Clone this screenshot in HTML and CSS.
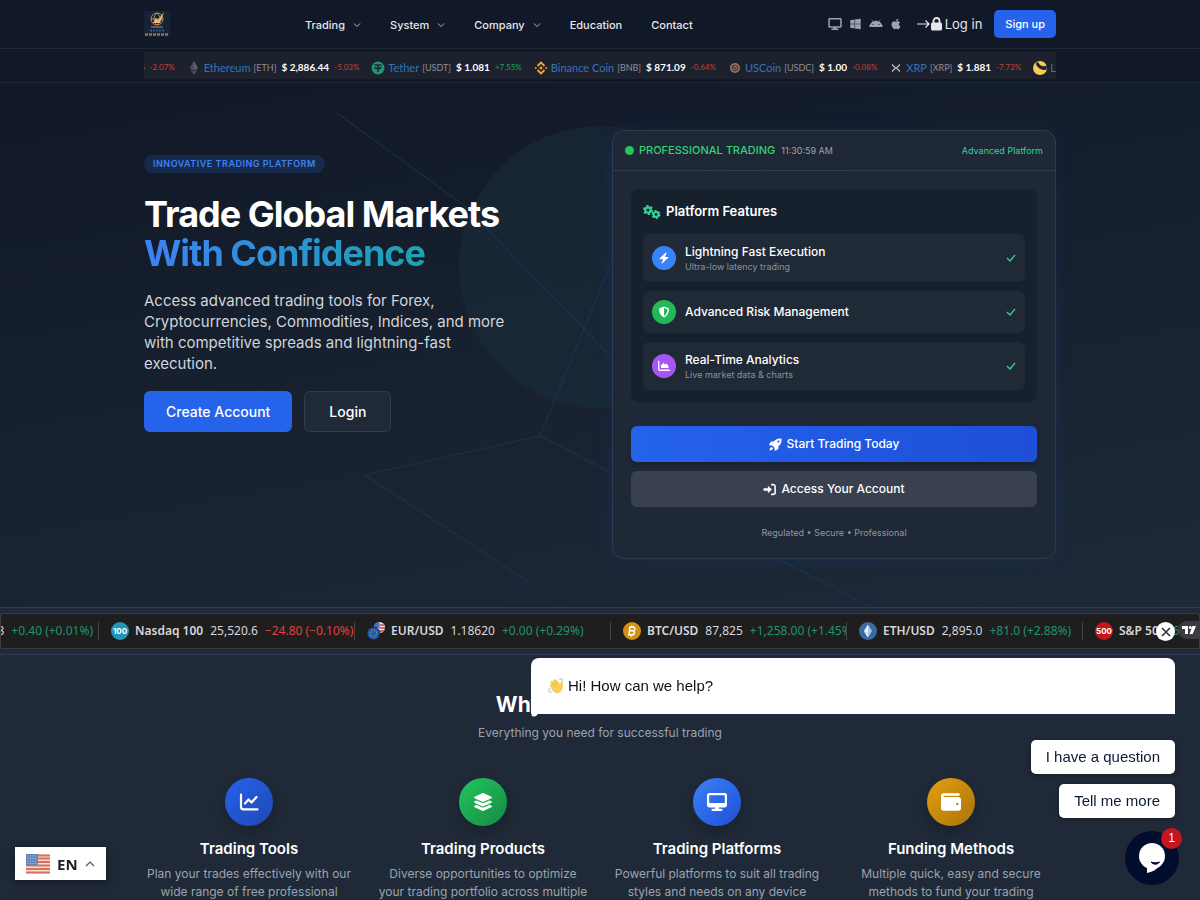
FILE: index.html
```html
<!DOCTYPE html>
<html lang="en">
<head>
    <meta charset="UTF-8">
    <meta name="viewport" content="width=device-width, initial-scale=1.0">
    <title>Trade Global Markets With Confidence</title>
    <link rel="stylesheet" href="styles.css">
</head>
<body>
    <!-- Header -->
    <header class="header">
        <div class="container header-inner">
            <a href="#" class="logo" aria-label="Home">
                <svg viewBox="0 0 26 26" width="26" height="26">
                    <rect width="26" height="26" fill="#172333"/>
                    <g fill="none" stroke="#b98b5e">
                        <circle cx="13" cy="8" r="6"/>
                        <path d="M7 8h12M13 2c-4 3-4 9 0 12M13 2c4 3 4 9 0 12M7 16h12"/>
                    </g>
                    <path d="M9 12l3-5 2 2 6-8-4 11z" fill="#e5bd87"/>
                    <path d="M6 19.500h14" stroke="#245a9c" stroke-width="2" stroke-dasharray="2 1"/>
                    <path d="M1 23.500h24" stroke="#a77b60" stroke-width="2" stroke-dasharray="3 1"/>
                </svg>
            </a>
            <nav class="nav">
                <a href="#">Trading <svg class="chevron" viewBox="0 0 8 8"><path d="M1 2.500l3 3 3-3"/></svg></a>
                <a href="#">System <svg class="chevron" viewBox="0 0 8 8"><path d="M1 2.500l3 3 3-3"/></svg></a>
                <a href="#">Company <svg class="chevron" viewBox="0 0 8 8"><path d="M1 2.500l3 3 3-3"/></svg></a>
                <a href="#">Education</a>
                <a href="#">Contact</a>
            </nav>
            <div class="header-actions">
                <div class="platforms">
                    <svg viewBox="0 0 576 512" width="14" height="12"><path fill-rule="evenodd" d="M64 0C29 0 0 29 0 64v288c0 35 29 64 64 64h176l-11 32h-69c-18 0-32 14-32 32s14 32 32 32h256c18 0 32-14 32-32s-14-32-32-32h-69l-11-32h176c35 0 64-29 64-64V64c0-35-29-64-64-64H64zm448 64v288H64V64h448z"/></svg>
                    <svg viewBox="0 0 448 512" width="11" height="12"><path d="M0 93.700l183.600-25.300v177.400H0V93.700zm0 324.600l183.600 25.300V268.400H0v149.900zm203.800 28L448 480V268.400H203.800v177.900zm0-380.600v180.100H448V32L203.800 65.700z"/></svg>
                    <svg viewBox="0 0 576 512" width="14" height="12"><path d="M420.550,301.930a24,24,0,1,1,24-24,24,24,0,0,1-24,24m-265.100,0a24,24,0,1,1,24-24,24,24,0,0,1-24,24m273.700-144.480,47.940-83a10,10,0,1,0-17.270-10h0l-48.540,84.070a301.250,301.250,0,0,0-246.560,0L116.180,64.450a10,10,0,1,0-17.270,10h0l47.940,83C64.530,202.220,8.240,285.550,0,384H576c-8.240-98.450-64.540-181.780-146.850-226.550"/></svg>
                    <svg viewBox="0 0 384 512" width="10" height="12"><path d="M318.700 268.700c-.2-36.700 16.400-64.400 50-84.800-18.800-26.900-47.200-41.700-84.700-44.600-35.500-2.800-74.300 20.700-88.500 20.700-15 0-49.400-19.700-76.400-19.700C63.300 141.200 4 184.800 4 273.500q0 39.300 14.400 81.200c12.800 36.700 59 126.700 107.200 125.200 25.200-.6 43-17.900 75.800-17.900 31.800 0 48.300 17.900 76.400 17.900 48.600-.7 90.400-82.500 102.600-119.300-65.200-30.700-61.700-90-61.700-91.900zm-56.600-164.200c27.300-32.400 24.800-61.900 24-72.500-24.100 1.400-52 16.400-67.900 34.900-17.500 19.800-27.800 44.300-25.600 71.900 26.100 2 49.900-11.400 69.500-34.300z"/></svg>
                </div>
                <a href="#" class="login-link">
                    <svg viewBox="0 0 27 14" width="27" height="14">
                        <path d="M1 7h12M9.500 3.500L13 7l-3.500 3.500" fill="none" stroke="#e5e7eb" stroke-width="1.200"/>
                        <rect x="15" y="5.500" width="11" height="8" rx="1.500" fill="#e5e7eb"/>
                        <path d="M17.500 6V4a3 3 0 0 1 6 0v2" fill="none" stroke="#e5e7eb" stroke-width="1.800"/>
                    </svg>
                    Log in
                </a>
                <a href="#" class="btn-signup">Sign up</a>
            </div>
        </div>
    </header>

    <!-- Crypto ticker -->
    <div class="crypto-bar">
        <div class="container">
            <div class="crypto-strip">
                <div class="crypto-track">
                    <div class="coin"><a href="#">Bitcoin</a><span class="code">[BTC]</span><b>$ 87,825.55</b><span class="change down">-2.07%</span></div>
                    <div class="coin">
                        <svg viewBox="0 0 14 14"><path d="M7 0l4 7-4 2.500L3 7z" fill="#5b6270"/><path d="M7 0v9.500L3 7zM3 8l4 2.500L11 8l-4 6z" fill="#484e5b"/></svg>
                        <a href="#">Ethereum</a><span class="code">[ETH]</span><b>$ 2,886.44</b><span class="change down">-5.03%</span>
                    </div>
                    <div class="coin">
                        <svg viewBox="0 0 14 14"><circle cx="7" cy="7" r="6.500" fill="#22926f"/><path d="M3.500 4h7M7 4v7M3.500 6.500c2 1.200 5 1.200 7 0" stroke="#1b2a33" stroke-width="1.500" fill="none"/></svg>
                        <a href="#">Tether</a><span class="code">[USDT]</span><b>$ 1.081</b><span class="change up">+7.55%</span>
                    </div>
                    <div class="coin">
                        <svg viewBox="0 0 14 14" fill="none" stroke="#efa92d" stroke-width="1.800"><path d="M3.500 5L7 1.500 10.500 5M3.500 9L7 12.500 10.500 9"/><path d="M7 5.200L8.800 7 7 8.800 5.200 7zM1.800 5.800L3 7 1.800 8.200.6 7zM12.200 5.800L13.400 7l-1.200 1.200L11 7z" fill="#efa92d" stroke="none"/></svg>
                        <a href="#">Binance Coin</a><span class="code">[BNB]</span><b>$ 871.09</b><span class="change down">-0.64%</span>
                    </div>
                    <div class="coin">
                        <svg viewBox="0 0 14 14"><circle cx="7" cy="7" r="5" fill="#9a7560"/><circle cx="7" cy="7" r="3" fill="none" stroke="#3c3237"/><path d="M6 5v3h2V6" fill="none" stroke="#3c3237"/></svg>
                        <a href="#">USCoin</a><span class="code">[USDC]</span><b>$ 1.00</b><span class="change down">-0.08%</span>
                    </div>
                    <div class="coin">
                        <svg viewBox="0 0 14 14"><path d="M3 3.500l2.800 2.800q1.200 1 2.400 0L11 3.500M3 10.500l2.800-2.800q1.200-1 2.400 0l2.800 2.800" fill="none" stroke="#b6bac2" stroke-width="1.300"/></svg>
                        <a href="#">XRP</a><span class="code">[XRP]</span><b>$ 1.881</b><span class="change down">-7.72%</span>
                    </div>
                    <div class="coin">
                        <svg viewBox="0 0 14 14"><circle cx="7" cy="7" r="7" fill="#f6cb58"/><path d="M3 2C3 6 8 9.500 13 9c1-1.500 1-3 .6-4.500C11 6 6.500 5 5 1z" fill="#25262f"/></svg>
                        <a href="#">Luna</a><span class="code">[LUNA]</span>
                    </div>
                </div>
            </div>
        </div>
    </div>

    <!-- Hero -->
    <section class="hero">
        <svg class="hero-art" viewBox="0 82 1200 525" preserveAspectRatio="xMidYMin slice" aria-hidden="true">
            <circle cx="600" cy="266" r="141" fill="#1c3142" fill-opacity="0.400"/>
            <g fill="none" stroke="#1e3a5f" stroke-opacity="0.500" stroke-width="1.500">
                <path d="M337 112L465 205 612 357M540 435L620 240"/>
                <path d="M540 435L365 474 530 582M540 435L873 607"/>
            </g>
        </svg>
        <div class="container hero-grid">
            <div class="hero-text">
                <span class="badge">INNOVATIVE TRADING PLATFORM</span>
                <h1>Trade Global Markets<br><span class="gradient-text">With Confidence</span></h1>
                <p>Access advanced trading tools for Forex, Cryptocurrencies, Commodities, Indices, and more with competitive spreads and lightning-fast execution.</p>
                <div class="hero-buttons">
                    <a href="#" class="btn btn-primary">Create Account</a>
                    <a href="#" class="btn btn-dark">Login</a>
                </div>
            </div>

            <div class="card">
                <div class="card-header">
                    <span class="dot"></span>
                    <span class="card-title">PROFESSIONAL TRADING</span>
                    <span class="clock">11:30:59 AM</span>
                    <span class="card-tag">Advanced Platform</span>
                </div>
                <div class="card-body">
                    <div class="features">
                        <h2>
                            <svg viewBox="0 0 18 14" width="18" height="14" fill="none" stroke="#34d399">
                                <circle cx="5" cy="5" r="2.700" stroke-width="2.200"/>
                                <circle cx="5" cy="5" r="4.200" stroke-width="1.700" stroke-dasharray="2.200 2.200"/>
                                <circle cx="13" cy="9.500" r="2.500" stroke-width="2.200"/>
                                <circle cx="13" cy="9.500" r="3.800" stroke-width="1.500" stroke-dasharray="2 2"/>
                            </svg>
                            Platform Features
                        </h2>
                        <div class="feature">
                            <span class="feature-icon blue"><svg viewBox="0 0 12 12"><path d="M7.800.5L1.800 6.300c-.4.400-.2.900.3.900h3L3.600 11c-.2.500.2.700.6.400l6-5.600c.4-.4.200-.9-.3-.9H7L8.500 1c.2-.5-.3-.8-.7-.5z"/></svg></span>
                            <div><strong>Lightning Fast Execution</strong><small>Ultra-low latency trading</small></div>
                            <svg class="check" viewBox="0 0 10 8"><path d="M1 4l3 3 5-6"/></svg>
                        </div>
                        <div class="feature">
                            <span class="feature-icon green"><svg viewBox="0 0 12 12"><path fill-rule="evenodd" d="M6 .5l4.500 1.800c.4.200.5.400.5.800 0 3.400-1.600 6.800-5 8.400C2.600 9.900 1 6.500 1 3.100c0-.4.100-.6.500-.8zM6 2v8c2.200-1.300 3.500-3.700 3.600-6.500z"/></svg></span>
                            <div><strong>Advanced Risk Management</strong></div>
                            <svg class="check" viewBox="0 0 10 8"><path d="M1 4l3 3 5-6"/></svg>
                        </div>
                        <div class="feature">
                            <span class="feature-icon purple"><svg viewBox="0 0 12 12"><path d="M.7 1.500v7.300c0 1 .5 1.500 1.500 1.500h9.100" fill="none" stroke="#fff" stroke-width="1.400" stroke-linecap="round"/><path d="M3 8V5.500L5.300 2.800l1.700 1.700 1.500-1L10.500 6v2z"/></svg></span>
                            <div><strong>Real-Time Analytics</strong><small>Live market data &amp; charts</small></div>
                            <svg class="check" viewBox="0 0 10 8"><path d="M1 4l3 3 5-6"/></svg>
                        </div>
                    </div>
                    <div class="card-actions">
                        <a href="#" class="action start">
                            <svg viewBox="0 0 12 12" width="13" height="13"><path fill-rule="evenodd" d="M11.500.5C8 0 5.800 1.300 4.300 3.300H2.200C1.500 3.300.2 6 .2 6.300c0 .4.300.6.700.6H3l2.100 2.100v2.100c0 .4.200.7.600.7.300 0 3-1.300 3-2V7.700C10.700 6.200 12 4 11.500.5zM8.800 2.200a1 1 0 1 1 0 2 1 1 0 0 1 0-2zM2.500 8.300C1.200 8.500.5 10 .5 11.500c1.500 0 3-.7 3.200-2z" fill="#fff"/></svg>
                            Start Trading Today
                        </a>
                        <a href="#" class="action access">
                            <svg viewBox="0 0 12 12" width="13" height="13"><path d="M8 1.500h1.500a1.700 1.700 0 0 1 1.700 1.700v5.600a1.700 1.700 0 0 1-1.700 1.700H8" fill="none" stroke="#fff" stroke-width="1.400" stroke-linecap="round"/><path d="M4.500 2.500L8.300 6 4.500 9.500V7.200H.5V4.800h4z" fill="#fff"/></svg>
                            Access Your Account
                        </a>
                    </div>
                    <p class="card-note">Regulated • Secure • Professional</p>
                </div>
            </div>
        </div>
    </section>

    <!-- Market ticker -->
    <div class="market-bar">
        <div class="market-strip">
            <div class="market-track">
                <div class="quote"><span class="price">1.3863</span><span class="gain">+0.40 (+0.01%)</span></div>
                <div class="quote wide">
                    <svg viewBox="0 0 18 18"><circle cx="9" cy="9" r="9" fill="#2196b8"/><text x="9" y="12" text-anchor="middle" class="coin-label">100</text></svg>
                    <b>Nasdaq 100</b><span class="price">25,520.6</span><span class="loss">−24.80 (−0.10%)</span>
                </div>
                <div class="quote wide">
                    <svg viewBox="0 0 18 18">
                        <circle cx="12.500" cy="5.500" r="5.500" fill="#e8e9ee"/>
                        <path d="M12.500 3H17M12.500 6H18M11 9h6" stroke="#d33d46" stroke-width="1.500"/>
                        <path d="M12.500 0A5.500 5.500 0 0 0 7 6h5.500z" fill="#3a72c9"/>
                        <circle cx="6.500" cy="11.500" r="6.800" fill="#1e1e1e"/>
                        <circle cx="6.500" cy="11.500" r="6" fill="#1d5cb5"/>
                        <circle cx="6.500" cy="11.500" r="3.300" fill="none" stroke="#c9b458" stroke-dasharray="1 1.600"/>
                    </svg>
                    <b>EUR/USD</b><span class="price">1.18620</span><span class="gain">+0.00 (+0.29%)</span>
                </div>
                <div class="quote">
                    <svg viewBox="0 0 18 18"><circle cx="9" cy="9" r="9" fill="#d6900f"/><path d="M7 5l-1 8M6 5.200h4.200c2.500 0 2.200 3.500-.5 3.600H7M9.500 8.800c2.800 0 2.300 4-.6 4H5M8.500 3.500v2M8 12.500v2M10.500 3.800v1.500" fill="none" stroke="#fff" stroke-width="1.400"/></svg>
                    <b>BTC/USD</b><span class="price">87,825</span><span class="gain">+1,258.00 (+1.45%)</span>
                </div>
                <div class="quote">
                    <svg viewBox="0 0 18 18"><circle cx="9" cy="9" r="9" fill="#3d6a9f"/><path d="M9 2.500l4 6.500-4 6.500L5 9z" fill="#a8c8e8"/><path d="M9 2.500V11L5 9zM9 12v3.500L5 9.500z" fill="#e9f2fa"/></svg>
                    <b>ETH/USD</b><span class="price">2,895.0</span><span class="gain">+81.0 (+2.88%)</span>
                </div>
                <div class="quote wide">
                    <svg viewBox="0 0 18 18"><circle cx="9" cy="9" r="9" fill="#c4161c"/><text x="9" y="12" text-anchor="middle" class="coin-label">500</text></svg>
                    <b>S&amp;P 500</b><span class="gain">6</span>
                </div>
            </div>
            <button class="tv-badge" aria-label="TradingView">
                <svg viewBox="0 0 14 10" width="14" height="10" fill="#fff"><path d="M0 1h6v8H3V4H0zM10.500 1H14l-3.300 8H7.500z"/><circle cx="8.300" cy="2.500" r="1.500"/></svg>
            </button>
        </div>
    </div>

    <!-- Why us -->
    <section class="why">
        <div class="container">
            <h2>Why Trade With Us?</h2>
            <p class="why-sub">Everything you need for successful trading</p>
            <div class="why-grid">
                <div class="why-item">
                    <span class="why-icon tools"><svg viewBox="0 0 20 20" fill="none" stroke="#fff" stroke-width="2.200" stroke-linecap="round" stroke-linejoin="round"><path d="M2 2.500v12.300c0 1.700.8 2.500 2.500 2.500H18.500M6 11.500l3.500-4 3 3L17.500 5"/></svg></span>
                    <h3>Trading Tools</h3>
                    <p>Plan your trades effectively with our wide range of free professional trading tools.</p>
                </div>
                <div class="why-item">
                    <span class="why-icon products"><svg viewBox="0 0 576 512" fill="#fff"><path d="M264.500 5.200c14.900-6.900 32.100-6.900 47 0l218.600 101c8.500 3.900 13.900 12.400 13.900 21.800s-5.400 17.900-13.900 21.800l-218.600 101c-14.900 6.900-32.100 6.900-47 0L45.900 149.800C37.400 145.800 32 137.300 32 128s5.400-17.900 13.900-21.800L264.500 5.200zM476.900 209.600l53.200 24.600c8.500 3.900 13.900 12.400 13.900 21.800s-5.400 17.900-13.900 21.800l-218.600 101c-14.900 6.900-32.100 6.900-47 0L45.900 277.800C37.400 273.800 32 265.300 32 256s5.400-17.900 13.900-21.800l53.200-24.600 152 70.200c23.400 10.800 50.400 10.800 73.800 0l152-70.200zm-152 198.200l152-70.200 53.200 24.600c8.500 3.900 13.900 12.400 13.900 21.800s-5.400 17.900-13.900 21.800l-218.600 101c-14.900 6.900-32.100 6.900-47 0L45.900 405.800C37.400 401.800 32 393.300 32 384s5.400-17.900 13.900-21.800l53.200-24.600 152 70.200c23.400 10.800 50.400 10.800 73.800 0z"/></svg></span>
                    <h3>Trading Products</h3>
                    <p>Diverse opportunities to optimize your trading portfolio across multiple markets.</p>
                </div>
                <div class="why-item">
                    <span class="why-icon platform"><svg viewBox="0 0 576 512" fill="#fff"><path fill-rule="evenodd" d="M64 0C29 0 0 29 0 64v288c0 35 29 64 64 64h176l-11 32h-69c-18 0-32 14-32 32s14 32 32 32h256c18 0 32-14 32-32s-14-32-32-32h-69l-11-32h176c35 0 64-29 64-64V64c0-35-29-64-64-64H64zm448 64v224H64V64h448z"/></svg></span>
                    <h3>Trading Platforms</h3>
                    <p>Powerful platforms to suit all trading styles and needs on any device anywhere.</p>
                </div>
                <div class="why-item">
                    <span class="why-icon funding"><svg viewBox="0 0 512 512" fill="#fff"><path fill-rule="evenodd" d="M64 32C28.700 32 0 60.700 0 96v320c0 35.300 28.700 64 64 64h384c35.300 0 64-28.700 64-64V192c0-35.300-28.700-64-64-64H80c-8.800 0-16-7.200-16-16s7.200-16 16-16h368c17.700 0 32-14.300 32-32s-14.300-32-32-32H64zm352 240a32 32 0 1 1 0 64 32 32 0 1 1 0-64z"/></svg></span>
                    <h3>Funding Methods</h3>
                    <p>Multiple quick, easy and secure methods to fund your trading account.</p>
                </div>
            </div>
        </div>
    </section>

    <!-- Language switcher -->
    <button class="language">
        <svg viewBox="0 0 24 20" width="24" height="20">
            <rect width="24" height="20" fill="#f0e3cf"/>
            <path d="M0 4.500h24M0 8h24M0 11.500h24M0 15h24M0 18.500h24M0 1.500h24" stroke="#d9705f" stroke-width="2"/>
            <rect width="12" height="11" fill="#5d87b8"/>
            <path d="M1.500 2h10M1.500 4.500h10M1.500 7h10M1.500 9.500h10" stroke="#b9cde2" stroke-dasharray="1 1.500"/>
        </svg>
        EN
        <svg viewBox="0 0 10 8" width="10" height="8"><path d="M1 6l4-4 4 4" fill="none" stroke="#555" stroke-width="1.200"/></svg>
    </button>

    <!-- Chat widget -->
    <div class="chat">
        <button class="chat-close" aria-label="Close"><svg viewBox="0 0 10 10" width="10" height="10"><path d="M1 1l8 8M9 1L1 9" stroke="#333" stroke-width="1.600"/></svg></button>
        <div class="chat-message">
            <svg viewBox="0 0 16 16" width="16" height="16"><path d="M2.500 4.500c-.5-1.500 1-2 1.800-1L5 3c-.4-1.600 1.200-2 2-.9 0-1 1.400-1.300 2-.2l3 4 .8-2c.5-1.300 2.300-.8 2.100.7-.2 3.400.3 6-1.400 8.400-2 2.700-5.500 2.800-7.700.8C4 12 2.500 9.500 2 8c-.5-1 .2-1.600.9-1.500z" fill="#f9cf58"/><path d="M11 1c1.500.3 2.700 1.200 3.500 2.500M12 0c1.500.3 2.800 1.200 3.500 2.500M1 10c.3 2 1.300 3.500 2.800 4.500M0 12c.4 1.400 1.200 2.400 2.300 3.200" fill="none" stroke="#a9c9ea"/><path d="M4.500 5l4 5M6.500 4l3.700 4.800" stroke="#e6b23d" stroke-width=".6"/></svg>
            Hi! How can we help?
        </div>
        <button class="chat-option">I have a question</button>
        <button class="chat-option">Tell me more</button>
        <button class="chat-launcher" aria-label="Open chat">
            <svg viewBox="0 0 28 32" width="28" height="32"><circle cx="14" cy="14" r="13" fill="#fff"/><path d="M9 25v6c5-1 9-3 12-7z" fill="#fff"/><path d="M13 20c2.500 3 6.500 3 8.500 0-2.500 1-6 1-8.500 0z" fill="#000d2d" stroke="#000d2d"/></svg>
            <span class="chat-count">1</span>
        </button>
    </div>
</body>
</html>
```
FILE: styles.css
```css
* {
    box-sizing: border-box;
}
body {
    margin: 0;
    font-family: Inter, sans-serif;
    font-size: 12px;
    line-height: 18px;
    color: #fff;
    background-color: #1f2937;
}
a {
    color: inherit;
    text-decoration: none;
}
h1, h2, h3, p {
    margin: 0;
}
button {
    border: none;
    font-family: inherit;
    cursor: pointer;
}
svg {
    flex: none;
}
.container {
    width: 76%;
    margin: 0 auto;
}

/* Header */
.header {
    background-color: #111827;
    border-bottom: 1px solid #1f2937;
}
.header-inner {
    display: flex;
    align-items: center;
    justify-content: space-between;
    height: 48px;
}
.logo {
    display: flex;
}
.nav {
    display: flex;
    gap: 29px;
    padding-top: 2px;
    font-size: 11px;
    font-weight: 500;
    color: #e5e7eb;
}
.nav a {
    display: flex;
    align-items: center;
    gap: 8px;
}
.chevron {
    width: 8px;
    height: 8px;
    fill: none;
    stroke: #b4b9c2;
}
.header-actions {
    display: flex;
    align-items: center;
    gap: 12px;
}
.platforms {
    display: flex;
    align-items: center;
    gap: 8px;
    margin-right: 3px;
    fill: #9ca3af;
}
.login-link {
    display: flex;
    align-items: center;
    gap: 2px;
    font-size: 13px;
    color: #e5e7eb;
}
.btn-signup {
    padding: 5px 11px;
    font-size: 11px;
    font-weight: 500;
    background-color: #2563eb;
    border-radius: 5px;
}

/* Crypto ticker */
.crypto-bar {
    padding: 3px 0;
    background-color: #111827;
    border-bottom: 1px solid #1c2838;
}
.crypto-strip {
    overflow: hidden;
    background-color: #1d212e;
}
.crypto-track {
    display: flex;
    gap: 12px;
    width: max-content;
    margin-left: -117px;
    padding: 7px 0 3px;
    font-family: Lato, sans-serif;
}
.coin {
    display: flex;
    align-items: center;
    gap: 3px;
    line-height: 17px;
    font-size: 10px;
}
.coin svg {
    width: 14px;
    height: 14px;
}
.coin a {
    font-size: 11px;
    color: #3473b7;
}
.coin .code {
    font-size: 9px;
    color: #8b8f98;
}
.coin b {
    margin: 0 2px;
}
.change {
    font-size: 8px;
}
.up {
    color: #18a35c;
}
.down {
    color: #c2402f;
}

/* Hero */
.hero {
    position: relative;
    padding: 47px 0 48px;
    overflow: hidden;
    background: linear-gradient(170deg, #111827 0%, #16202e 45%, #1e2939 100%);
}
.hero-art {
    position: absolute;
    top: 0;
    left: 0;
    width: 100%;
    height: 100%;
}
.hero-grid {
    position: relative;
    display: grid;
    grid-template-columns: 1fr 1fr;
    gap: 24px;
}
.hero-text {
    max-width: 384px;
    padding-top: 24px;
}
.badge {
    display: inline-block;
    padding: 0 9px;
    font-size: 9px;
    font-weight: 600;
    letter-spacing: 0.5px;
    color: #3b82f6;
    background-color: #172a4c;
    border-radius: 9px;
}
.hero-text h1 {
    margin-top: 22px;
    font-size: 36px;
    line-height: 39px;
    letter-spacing: -1px;
}
.gradient-text {
    color: transparent;
    background: linear-gradient(90deg, #3b82f6, #1fa2b0);
    background-clip: text;
    -webkit-background-clip: text;
}
.hero-text p {
    margin: 17px 0;
    font-size: 15px;
    line-height: 21px;
    color: #d1d5db;
}
.hero-buttons {
    display: flex;
    gap: 12px;
}
.btn {
    padding: 10px 24px;
    font-size: 14px;
    line-height: 19px;
    font-weight: 500;
    border: 1px solid transparent;
    border-radius: 6px;
}
.btn-primary {
    padding: 10px 21px;
    background-color: #2563eb;
}
.btn-dark {
    background-color: #1f2937;
    border-color: #333d4b;
}

/* Hero card */
.card {
    background-color: rgba(31, 41, 55, 0.9);
    border: 1px solid #303c4c;
    border-radius: 12px;
    box-shadow: 0 0 18px rgba(37, 99, 235, 0.12);
}
.card-header {
    display: flex;
    align-items: center;
    padding: 10px 12px;
    line-height: 19px;
    border-bottom: 1px solid #303c4c;
}
.dot {
    width: 9px;
    height: 9px;
    background-color: #22c55e;
    border-radius: 50%;
}
.card-title {
    margin: 0 6px 0 5px;
    font-size: 11px;
    font-weight: 500;
    color: #34d375;
}
.clock {
    font-size: 9px;
    color: #9ca3af;
}
.card-tag {
    margin-left: auto;
    font-size: 9px;
    color: #34d399;
}
.card-body {
    padding: 18px;
}
.features {
    display: flex;
    flex-direction: column;
    gap: 9px;
    padding: 12px;
    background-color: #17202d;
    border-radius: 8px;
}
.features h2 {
    display: flex;
    align-items: center;
    gap: 5px;
    margin-bottom: 3px;
    font-size: 13px;
    line-height: 21px;
    font-weight: 600;
}
.feature {
    display: flex;
    align-items: center;
    gap: 9px;
    padding: 9px;
    background-color: #202936;
    border-radius: 6px;
}
.feature strong {
    display: block;
    font-size: 12px;
    font-weight: 500;
}
.feature small {
    display: block;
    font-size: 9px;
    line-height: 12px;
    color: #8b929e;
}
.feature-icon {
    display: flex;
    align-items: center;
    justify-content: center;
    width: 24px;
    height: 24px;
    border-radius: 50%;
}
.feature-icon svg {
    width: 12px;
    height: 12px;
    fill: #fff;
}
.blue {
    background-color: #3b82f6;
}
.green {
    background-color: #22b95b;
}
.purple {
    background-color: #a855f7;
}
.check {
    width: 10px;
    height: 8px;
    margin-left: auto;
    fill: none;
    stroke: #34d388;
    stroke-width: 1.3px;
}
.card-actions {
    display: flex;
    flex-direction: column;
    gap: 9px;
    margin: 24px 0 18px;
}
.action {
    display: flex;
    align-items: center;
    justify-content: center;
    gap: 5px;
    padding: 9px;
    font-weight: 500;
    border-radius: 6px;
}
.start {
    background: linear-gradient(90deg, #2563eb, #1d4fd8);
    box-shadow: 0 3px 6px rgba(0, 0, 0, 0.2);
}
.access {
    background-color: #394150;
}
.card-note {
    font-size: 9px;
    line-height: 15px;
    text-align: center;
    color: #9096a2;
}

/* Market ticker */
.market-bar {
    padding: 5px 0;
    border-top: 1px solid #303b4c;
    border-bottom: 1px solid #303b4c;
}
.market-strip {
    position: relative;
    overflow: hidden;
    background-color: #1e1e1e;
    border: 1px solid #3b3b3b;
    border-radius: 2px;
}
.market-track {
    display: flex;
    width: max-content;
    margin-left: -138px;
    padding: 8px 0;
    font-family: "Noto Sans", sans-serif;
    font-size: 12px;
    line-height: 18px;
    color: #d5d7dc;
}
.quote {
    display: flex;
    align-items: center;
    justify-content: flex-start;
    gap: 7px;
    width: 236px;
    padding-left: 12px;
    overflow: hidden;
    white-space: nowrap;
    border-right: 1px solid #444;
}
.quote:first-child {
    justify-content: flex-end;
    padding-right: 5px;
}
.wide {
    width: 256px;
}
.quote svg {
    width: 18px;
    height: 18px;
    margin-right: -1px;
}
.quote b {
    font-weight: 600;
}
.coin-label {
    font-family: Inter, sans-serif;
    font-size: 8px;
    font-weight: 700;
    fill: #fff;
}
.gain {
    color: #22936f;
}
.loss {
    color: #e0403f;
}
.tv-badge {
    position: absolute;
    top: 7px;
    right: 0;
    padding: 4px 3px 4px 4px;
    line-height: 10px;
    background-color: #3a3c42;
    border-radius: 9px 0 0 9px;
}

/* Why us */
.why {
    padding: 36px 0 48px;
    text-align: center;
}
.why h2 {
    font-size: 21px;
    line-height: 27px;
}
.why-sub {
    margin: 6px 0 36px;
    color: #9ca3af;
}
.why-grid {
    display: grid;
    grid-template-columns: repeat(4, 1fr);
    gap: 24px;
}
.why-item {
    display: flex;
    flex-direction: column;
    align-items: center;
}
.why-icon {
    display: flex;
    align-items: center;
    justify-content: center;
    width: 48px;
    height: 48px;
    border-radius: 50%;
    box-shadow: 0 6px 12px rgba(0, 0, 0, 0.18);
}
.why-icon svg {
    width: 20px;
    height: 20px;
}
.tools {
    background: linear-gradient(135deg, #2563eb, #1e48b5);
}
.products {
    background: linear-gradient(135deg, #22c55e, #178a43);
}
.platform {
    background: linear-gradient(135deg, #3b82f6, #1d4ed8);
}
.funding {
    background: linear-gradient(135deg, #e5a00f, #aa720a);
}
.why-item h3 {
    margin: 12px 0 6px;
    font-size: 15px;
    line-height: 21px;
    font-weight: 600;
}
.why-item p {
    color: #9ca3af;
}

/* Language switcher */
.language {
    position: fixed;
    left: 15px;
    bottom: 20px;
    display: flex;
    align-items: center;
    gap: 7px;
    padding: 7px 11px 6px;
    font-family: "Open Sans", sans-serif;
    font-size: 15px;
    line-height: 20px;
    font-weight: 700;
    color: #222;
    background-color: #fff;
    box-shadow: 0 2px 8px rgba(0, 0, 0, 0.4);
}

/* Chat widget */
.chat {
    position: fixed;
    right: 25px;
    bottom: 15px;
    display: flex;
    flex-direction: column;
    align-items: flex-end;
    width: 644px;
    font-family: "Liberation Sans", sans-serif;
    font-size: 15px;
    line-height: 20px;
}
.chat-close {
    display: flex;
    align-items: center;
    justify-content: center;
    width: 19px;
    height: 19px;
    margin-bottom: 17px;
    padding: 0;
    background-color: #fff;
    border-radius: 50%;
}
.chat-message {
    display: flex;
    align-items: center;
    gap: 4px;
    width: 100%;
    margin-bottom: 26px;
    padding: 18px 17px;
    color: #111;
    background-color: #fff;
    border-radius: 8px 8px 0 0;
}
.chat-option {
    margin-bottom: 10px;
    padding: 7px 15px;
    font-size: 15px;
    line-height: 20px;
    color: #0c1936;
    background-color: #fff;
    border-radius: 5px;
    box-shadow: 0 1px 4px rgba(0, 0, 0, 0.3);
}
.chat-launcher {
    position: relative;
    display: flex;
    align-items: center;
    justify-content: center;
    width: 54px;
    height: 54px;
    margin: 3px -4px 0 0;
    padding: 0;
    background-color: #000d2d;
    border-radius: 50%;
}
.chat-count {
    position: absolute;
    top: -3px;
    right: -3px;
    width: 21px;
    font-size: 12px;
    line-height: 21px;
    color: #fff;
    background-color: #c4161c;
    border-radius: 50%;
}
```
